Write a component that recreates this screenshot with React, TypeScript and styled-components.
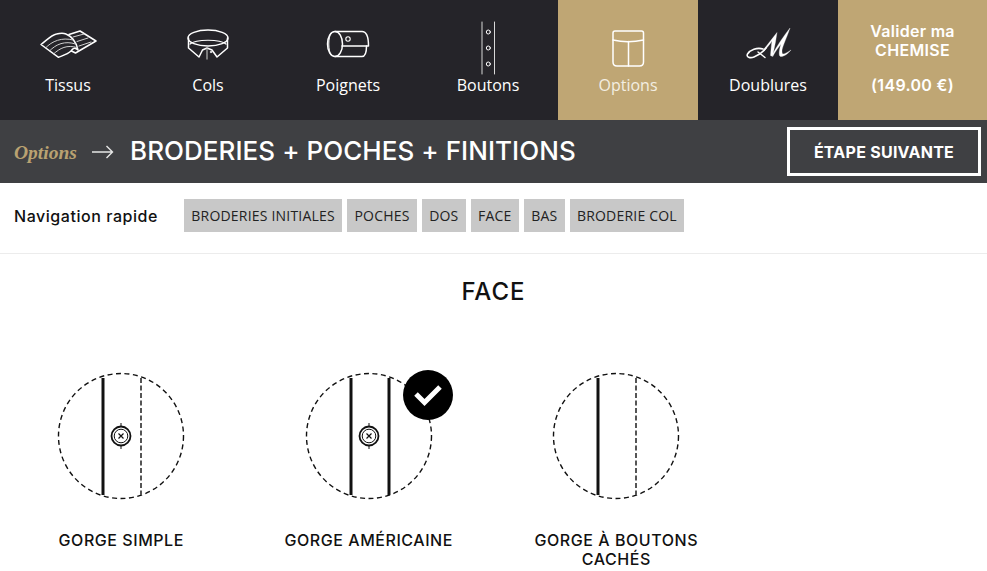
import React from 'react'
import styled, { createGlobalStyle } from 'styled-components'

const GlobalStyle = createGlobalStyle`
  html, body {
    margin: 0;
    padding: 0;
    background: #fff;
    overflow: hidden;
  }
`

const Page = styled.div`
  width: 987px;
  height: 571px;
  overflow: hidden;
  font-family: 'Open Sans', sans-serif;
  color: #111;
`

const Nav = styled.nav`
  display: flex;
  height: 120px;
  background: #252429;
`

const NavItem = styled.div<{ $active?: boolean; $first?: boolean }>`
  box-sizing: border-box;
  width: ${(p) => (p.$first ? 138 : 140)}px;
  padding-right: ${(p) => (p.$first ? 2 : 0)}px;
  flex: none;
  display: flex;
  flex-direction: column;
  align-items: center;
  background: ${(p) => (p.$active ? '#bfa674' : 'transparent')};
  color: ${(p) => (p.$active ? '#f3eee2' : '#fff')};
`

const NavIcon = styled.svg`
  display: block;
  width: 140px;
  height: 75px;
  flex: none;
  fill: none;
  stroke: #fff;
  stroke-width: 1.5;
  stroke-linejoin: round;
  stroke-linecap: round;
`

const NavLabel = styled.span`
  font-size: 16px;
  line-height: 20px;
`

const Validate = styled.div`
  flex: 1;
  background: #bfa674;
  color: #fff;
  display: flex;
  flex-direction: column;
  align-items: center;
  padding-top: 22px;
  font-family: 'Inter', sans-serif;
  font-size: 16px;
  letter-spacing: 0.3px;
  font-weight: 600;
  line-height: 19px;
`

const Price = styled.span`
  margin-top: 16px;
`

const Band = styled.div`
  height: 63px;
  background: #3f4043;
  display: flex;
  align-items: center;
  padding: 0 6px 0 14px;
`

const StepName = styled.span`
  font-family: 'Liberation Serif', serif;
  font-style: italic;
  font-weight: 700;
  font-size: 19.5px;
  color: #b9a271;
  width: 78px;
  padding-top: 2px;
`

const Arrow = styled.svg`
  width: 22px;
  height: 14px;
  margin-right: 16px;
  fill: none;
  stroke: #e6e6e6;
  stroke-width: 1.4;
`

const Title = styled.h1`
  flex: 1;
  margin: 0;
  padding-bottom: 2px;
  font-family: 'Inter', sans-serif;
  font-weight: 500;
  font-size: 26px;
  letter-spacing: 0.05px;
  color: #fff;
  white-space: nowrap;
`

const NextButton = styled.div`
  box-sizing: border-box;
  width: 194px;
  height: 49px;
  border: 3px solid #fff;
  display: flex;
  align-items: center;
  justify-content: center;
  font-family: 'Inter', sans-serif;
  font-weight: 700;
  font-size: 16px;
  letter-spacing: 0.25px;
  color: #fff;
`

const QuickNav = styled.div`
  height: 71px;
  box-sizing: border-box;
  border-bottom: 1px solid #ececec;
  display: flex;
  align-items: flex-start;
  padding: 16px 0 0 14px;
`

const QuickLabel = styled.span`
  width: 170px;
  flex: none;
  padding-top: 1px;
  font-family: 'Inter', sans-serif;
  font-weight: 500;
  font-size: 16px;
  letter-spacing: 0.55px;
  line-height: 33px;
  color: #111;
`

const Chips = styled.div`
  display: flex;
  gap: 5px;
`

const Chip = styled.span`
  height: 33px;
  padding: 0 7.3px;
  background: #c8c8c8;
  font-size: 14px;
  letter-spacing: 0.2px;
  line-height: 33px;
  color: #222;
`

const Heading = styled.h2`
  margin: 25px 0 0;
  text-align: center;
  font-family: 'Inter', sans-serif;
  font-weight: 500;
  font-size: 24px;
  letter-spacing: 1px;
  line-height: 26px;
  color: #111;
`

const Options = styled.div`
  display: grid;
  grid-template-columns: repeat(3, 247.5px);
  margin: 67px 0 0 -2.5px;
`

const Option = styled.div`
  display: flex;
  flex-direction: column;
  align-items: center;
`

const Swatch = styled.div`
  position: relative;
  width: 128px;
  height: 128px;
`

const SwatchArt = styled.svg`
  display: block;
  width: 128px;
  height: 128px;
  fill: none;
  stroke: #111;
`

const Badge = styled.div`
  position: absolute;
  top: -2px;
  right: -20px;
  width: 50px;
  height: 50px;
  border-radius: 50%;
  background: #000;
  display: flex;
  align-items: center;
  justify-content: center;
`

const OptionLabel = styled.div`
  margin-top: 31px;
  max-width: 190px;
  text-align: center;
  font-family: 'Inter', sans-serif;
  font-weight: 500;
  font-size: 16px;
  letter-spacing: 0.55px;
  line-height: 19px;
  color: #111;
`

const Tissus = () => (
  <NavIcon viewBox="-2 0 140 75">
    <path d="M41 44.5 C46 41 51 35 56.5 34 C60 33 63 32.5 66 34 C72 36.5 76 41 78 50 C75 47 73 48 71 51 C68 54 63 55.5 58.5 57.3 Z" />
    <path d="M69 34.5 L80 31 L96 41 L75.5 53 L71.5 51" />
    <path d="M45.5 48 C52 41 62 37 73 40" strokeWidth="1" stroke="#cfcfcf" />
    <path d="M49.5 51 C56 44 65 40.5 75.5 44" strokeWidth="1" stroke="#cfcfcf" />
    <path d="M53.5 54 C60 48 67 44.5 77 47.5" strokeWidth="1" stroke="#cfcfcf" />
    <path d="M73 37 L84 34 M77 41.5 L88 38 M79 46 L91 42" strokeWidth="1" stroke="#cfcfcf" />
  </NavIcon>
)

const Cols = () => (
  <NavIcon viewBox="138 0 140 75">
    <ellipse cx="208" cy="38" rx="20" ry="8" />
    <path d="M188.5 38 L188.5 48 L199 57 L202.5 50 L207 48 L212 50 L217 57 L227.5 48 L227.5 38" />
    <path d="M190 44 C196 39 220 39 226 44" strokeWidth="1.2" />
    <path d="M207 49 L207 59" stroke="#9a9a9a" strokeWidth="1.5" />
    <circle cx="211" cy="52" r="0.8" fill="#fff" strokeWidth="0.6" />
  </NavIcon>
)

const Poignets = () => (
  <NavIcon viewBox="278 0 140 75">
    <ellipse cx="335" cy="44" rx="7.5" ry="12.5" />
    <path d="M335 31.5 L362 31.5 C366 31.5 368.5 37 368.5 46 L342 46" />
    <path d="M335 56.5 L362 56.5 C365 56.5 366.5 54 366.5 46" />
    <path d="M331 33 C328 38 328 50 331 55" strokeWidth="1" />
    <circle cx="348" cy="39" r="2.2" strokeWidth="1.1" />
  </NavIcon>
)

const Boutons = () => (
  <NavIcon viewBox="418 0 140 75">
    <path d="M482 22 L482 74 M494.5 22 L494.5 74" strokeWidth="1" stroke="#d8d8d8" />
    <circle cx="488.3" cy="32" r="2" strokeWidth="1" />
    <circle cx="488.3" cy="48" r="2" strokeWidth="1" />
    <circle cx="488.3" cy="64" r="2" strokeWidth="1" />
  </NavIcon>
)

const Poche = () => (
  <NavIcon viewBox="558 0 140 75">
    <path d="M613 33 Q613 31 615 31 L641.5 31 Q643.5 31 643.5 33 L643.5 62 Q643.5 66 639.5 66 L617 66 Q613 66 613 62 Z" />
    <path d="M613 40 C622 42 634 42 643.5 40 M628.5 41.5 L628.5 66" />
  </NavIcon>
)

const Monogramme = () => (
  <NavIcon viewBox="698 0 140 75">
    <path d="M763 49 C757 47 750 50 747.5 54 C746 57 750 58.5 754 57 C759 55 763 52 766 48" strokeWidth="1.6" />
    <path d="M758 52 L765 57.5" strokeWidth="1.4" />
    <path
      d="M764 49 C768 44 772 39 777 32.5 L775.5 42 L772.5 56.5 L770.5 55.5 C771 49 771.5 44 772 41 C770 44 767 48 764 51 Z"
      fill="#fff"
      strokeWidth="0.3"
    />
    <path
      d="M772 55 C777 46 783 37 790 28 C787 37 783 45 782 50 C782 52 782 54 783 54 C785 54 788 52 791 50 C788 54 783 57 780.5 56.5 C778.5 56 779 50 781 44 C778 48 775 52 773 56 Z"
      fill="#fff"
      strokeWidth="0.3"
    />
  </NavIcon>
)

type SwatchProps = { rightSolid?: boolean; button?: boolean; selected?: boolean }

// center of the art is 64,64 - matches the dashed ring
const GorgeArt = ({ rightSolid, button, selected }: SwatchProps) => (
  <Swatch>
    <SwatchArt viewBox="0 0 128 128">
      <circle cx="64" cy="64" r="62.5" strokeWidth="1.4" strokeDasharray="5 3.5" />
      <path d="M46 6 L46 123" strokeWidth="3" />
      {rightSolid ? (
        <path d="M84 6 L84 123" strokeWidth="3" />
      ) : (
        <path d="M84 6 L84 123" strokeWidth="2" strokeDasharray="5 2.5" stroke="#555" />
      )}
      {button && (
        <>
          <path d="M64 51 L64 77" strokeWidth="1" />
          <circle cx="64" cy="64" r="9.5" fill="#fff" strokeWidth="1.8" />
          <circle cx="64" cy="64" r="6.8" strokeWidth="1" />
          <path d="M61.5 61.5 L66.5 66.5 M66.5 61.5 L61.5 66.5" strokeWidth="1.2" />
        </>
      )}
    </SwatchArt>
    {selected && (
      <Badge>
        <svg width="30" height="24" viewBox="0 0 30 24" fill="none" stroke="#fff" strokeWidth="5">
          <path d="M3 11 L11.5 19.5 L27 4" />
        </svg>
      </Badge>
    )}
  </Swatch>
)

const navItems = [
  { label: 'Tissus', icon: <Tissus /> },
  { label: 'Cols', icon: <Cols /> },
  { label: 'Poignets', icon: <Poignets /> },
  { label: 'Boutons', icon: <Boutons /> },
  { label: 'Options', icon: <Poche />, active: true },
  { label: 'Doublures', icon: <Monogramme /> },
]

const chips = ['BRODERIES INITIALES', 'POCHES', 'DOS', 'FACE', 'BAS', 'BRODERIE COL']

const App: React.FC = () => {
  return (
    <Page>
      <GlobalStyle />
      <Nav>
        {navItems.map((item, i) => (
          <NavItem key={item.label} $active={item.active} $first={i === 0}>
            {item.icon}
            <NavLabel>{item.label}</NavLabel>
          </NavItem>
        ))}
        <Validate>
          <span>Valider ma</span>
          <span>CHEMISE</span>
          <Price>(149.00 €)</Price>
        </Validate>
      </Nav>

      <Band>
        <StepName>Options</StepName>
        <Arrow viewBox="0 0 22 14">
          <path d="M0 7 L20.5 7 M14.5 1 L20.5 7 L14.5 13" />
        </Arrow>
        <Title>BRODERIES + POCHES + FINITIONS</Title>
        <NextButton>ÉTAPE SUIVANTE</NextButton>
      </Band>

      <QuickNav>
        <QuickLabel>Navigation rapide</QuickLabel>
        <Chips>
          {chips.map((c) => (
            <Chip key={c}>{c}</Chip>
          ))}
        </Chips>
      </QuickNav>

      <Heading>FACE</Heading>

      <Options>
        <Option>
          <GorgeArt button />
          <OptionLabel>GORGE SIMPLE</OptionLabel>
        </Option>
        <Option>
          <GorgeArt button rightSolid selected />
          <OptionLabel>GORGE AMÉRICAINE</OptionLabel>
        </Option>
        <Option>
          <GorgeArt />
          <OptionLabel>GORGE À BOUTONS CACHÉS</OptionLabel>
        </Option>
      </Options>
    </Page>
  )
}

export default App
